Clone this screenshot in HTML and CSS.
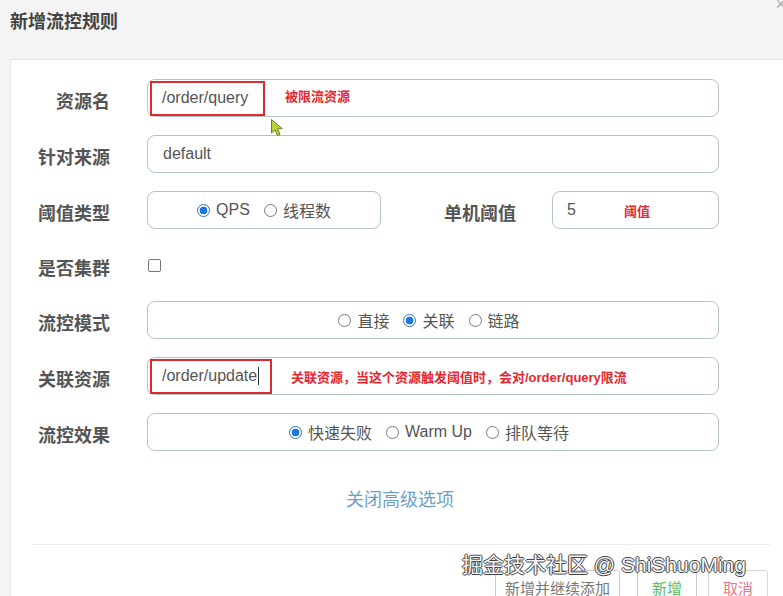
FILE: index.html
```html
<!DOCTYPE html>
<html lang="zh-CN">
<head>
<meta charset="utf-8">
<title>新增流控规则</title>
<link rel="stylesheet" href="styles.css">
</head>
<body>
<div class="header">
  <h1 class="title">新增流控规则</h1>
  <span class="close">×</span>
</div>
<div class="panel">
  <div class="form">
    <div class="row">
      <label class="label">资源名</label>
      <div class="field wide tight">
        <span class="redbox rb1">/order/query</span>
        <span class="note n1">被限流资源</span>
      </div>
    </div>
    <div class="row">
      <label class="label">针对来源</label>
      <div class="field wide text">default</div>
    </div>
    <div class="row">
      <label class="label">阈值类型</label>
      <div class="field type">
        <div class="radios narrow">
          <span class="radio"><span class="dot on"></span>QPS</span>
          <span class="radio"><span class="dot"></span>线程数</span>
        </div>
      </div>
      <label class="label label2">单机阈值</label>
      <div class="field thr text"><span>5</span><span class="note n3">阈值</span></div>
    </div>
    <div class="row short">
      <label class="label">是否集群</label>
      <span class="check"></span>
    </div>
    <div class="row">
      <label class="label">流控模式</label>
      <div class="field wide">
        <div class="radios">
          <span class="radio"><span class="dot"></span>直接</span>
          <span class="radio"><span class="dot on"></span>关联</span>
          <span class="radio"><span class="dot"></span>链路</span>
        </div>
      </div>
    </div>
    <div class="row">
      <label class="label">关联资源</label>
      <div class="field wide tight">
        <span class="redbox rb2">/order/update<span class="caret"></span></span>
        <span class="note n2">关联资源，当这个资源触发阈值时，会对/order/query限流</span>
      </div>
    </div>
    <div class="row last">
      <label class="label">流控效果</label>
      <div class="field wide">
        <div class="radios">
          <span class="radio"><span class="dot on"></span>快速失败</span>
          <span class="radio"><span class="dot"></span>Warm Up</span>
          <span class="radio"><span class="dot"></span>排队等待</span>
        </div>
      </div>
    </div>
  </div>
  <div class="toggle">关闭高级选项</div>
  <div class="footer">
    <button class="btn btn-more">新增并继续添加</button>
    <button class="btn btn-add">新增</button>
    <button class="btn btn-cancel">取消</button>
  </div>
</div>
<div class="watermark">掘金技术社区 @ ShiShuoMing</div>
<svg class="pointer" width="16" height="20" viewBox="0 0 16 20">
  <path d="M1.5 1.5 L1.5 15 L5 11.8 L7.6 17.6 L10 16.5 L7.5 10.8 L12.2 10.6 Z" fill="#b8d43a" stroke="#6b7d1a" stroke-width="1" stroke-linejoin="round"/>
</svg>
</body>
</html>
```

FILE: styles.css
```css
* { box-sizing: border-box; }
html, body { margin: 0; height: 100%; overflow: hidden; }
body {
  background: #f4f4f4;
  font-family: "Liberation Sans", "Noto Sans CJK SC", sans-serif;
  color: #555;
  position: relative;
}
.header {
  height: 59px;
  padding: 9px 0 0 10px;
  position: relative;
}
.title {
  margin: 0;
  font-size: 18px;
  line-height: 26px;
  font-weight: bold;
  color: #444;
}
.close {
  position: absolute;
  right: -3px;
  top: -6px;
  font-size: 18px;
  color: #aaa;
}
.panel {
  margin-left: 10px;
  height: calc(100% - 59px);
  overflow: hidden;
  background: #fff;
  border-top: 1px solid #e3e3e3;
  border-left: 1px solid #e6e6e6;
}
.form { padding-top: 19px; }
.row {
  display: flex;
  align-items: center;
  height: 38px;
  margin-bottom: 18px;
}
.row.short { height: 36px; }
.row.last { margin-bottom: 0; }
.label {
  width: 99px;
  margin-right: 37px;
  padding-top: 3px;
  text-align: right;
  font-size: 18px;
  font-weight: bold;
  color: #555;
  white-space: nowrap;
}
.label2 { width: 135px; margin-right: 36px; }
.field {
  height: 38px;
  border: 1px solid #b2c4c6;
  border-radius: 8px;
  display: flex;
  align-items: center;
  font-size: 16px;
  color: #555;
}
.wide { width: 572px; }
.tight { padding-left: 2px; }
.text { padding-left: 15px; }
.type { width: 234px; justify-content: center; }
.thr { width: 167px; padding-left: 14px; }
.redbox {
  height: 35px;
  border: 2px solid #dc2a30;
  padding-left: 10px;
  display: flex;
  align-items: center;
  white-space: nowrap;
}
.rb1 { width: 115px; }
.rb2 { width: 122px; }
.caret {
  display: inline-block;
  width: 1px;
  height: 18px;
  background: #333;
  margin-left: 1px;
}
.note {
  color: #e8262e;
  font-size: 13px;
  font-weight: bold;
  white-space: nowrap;
}
.n1 { margin-left: 20px; margin-top: -6px; }
.n2 { margin-left: 19px; }
.n3 { margin-left: 48px; }
.radios {
  flex: 1;
  display: flex;
  justify-content: center;
  gap: 14px;
  padding-right: 8px;
}
.radios.narrow { padding-right: 0; gap: 14px; }
.radio {
  display: flex;
  align-items: center;
  gap: 6px;
  font-size: 16px;
  color: #555;
  white-space: nowrap;
}
.dot {
  width: 13px;
  height: 13px;
  border-radius: 50%;
  border: 1px solid #7a7a7a;
  background: #fff;
}
.dot.on {
  border: 1.5px solid #1f78e0;
  background: radial-gradient(circle, #1f78e0 0 3.6px, #fff 4.2px);
}
.check {
  width: 13px;
  height: 13px;
  margin-left: 1px;
  border: 1px solid #777;
  border-radius: 2px;
}
.toggle {
  margin-top: 37px;
  height: 24px;
  line-height: 24px;
  text-align: center;
  padding-left: 6px;
  font-size: 18px;
  color: #6c9fc7;
}
.footer {
  margin: 32px 13px 0 21px;
  border-top: 1px solid #ececec;
  padding: 25px 2px 0 0;
  display: flex;
  justify-content: flex-end;
}
.btn {
  height: 34px;
  background: #fff;
  border: 1px solid #ccc;
  border-radius: 3px;
  font-family: "Liberation Sans", "Noto Sans CJK SC", sans-serif;
  font-size: 15px;
  padding: 0;
}
.btn-more { width: 125px; color: #777; }
.btn-add { width: 60px; margin-left: 17px; color: #5cb85c; border-color: #a8d8a8 #ccc #ccc #a8d8a8; }
.btn-cancel { width: 60px; margin-left: 11px; color: #e27a8c; border-color: #d8d8d8; }
.watermark {
  position: absolute;
  left: 462px;
  top: 551px;
  font-size: 21px;
  line-height: 28px;
  color: #f6f6f6;
  white-space: nowrap;
  text-shadow: 1px 0 0 #444, -1px 0 0 #444, 0 1px 0 #444, 0 -1px 0 #444;
}
.pointer {
  position: absolute;
  left: 270px;
  top: 118px;
}
```
